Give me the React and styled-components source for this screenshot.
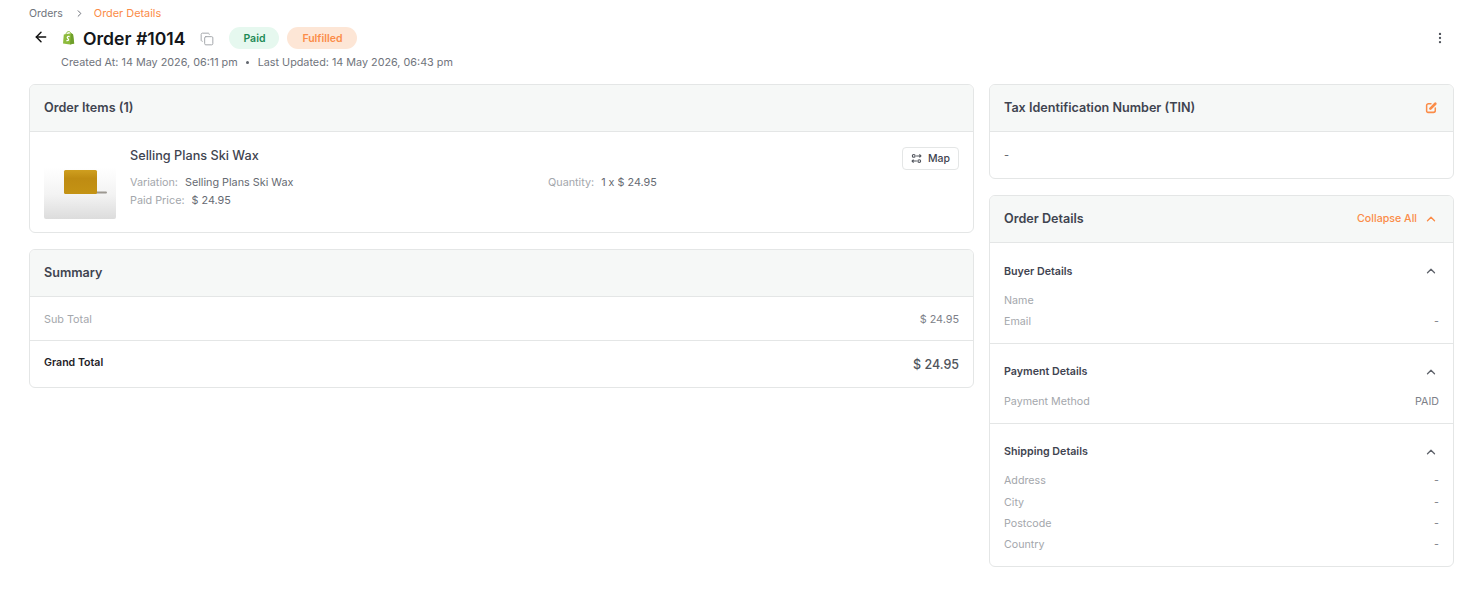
import React from 'react'
import styled, { createGlobalStyle } from 'styled-components'
import { ArrowLeft, ChevronRight, ChevronUp, Copy, EllipsisVertical } from 'lucide-react'

const GlobalStyle = createGlobalStyle`
  html, body { margin: 0; padding: 0; background: #fff; }
  body { font-family: Inter, "Liberation Sans", sans-serif; color: #3f4450; }
`

const orange = '#fb8c48'
const borderColor = '#e4e6e6'

const Page = styled.div`
  width: 1480px;
  height: 608px;
  box-sizing: border-box;
  padding: 7px 26px 0 29px;
  overflow: hidden;
`

const Crumbs = styled.div`
  display: flex;
  align-items: center;
  height: 13px;
  font-size: 10.5px;
  color: #70747c;
`

const CrumbSep = styled(ChevronRight)`
  width: 11px;
  height: 11px;
  margin: 0 9px 0 11px;
  color: #60646c;
`

const CrumbActive = styled.span`
  margin-top: -1px;
  font-size: 10.9px;
  color: ${orange};
`

const TitleRow = styled.div`
  display: flex;
  align-items: center;
  height: 26px;
  margin-top: 5px;
`

const BackIcon = styled(ArrowLeft)`
  width: 16px;
  height: 16px;
  margin: -3px 0 0 4px;
  color: #111;
`

const Bag = styled.svg`
  width: 13px;
  height: 14px;
  margin-left: 13px;
`

const Title = styled.h1`
  margin: 0 0 0 8px;
  font-size: 17.6px;
  font-weight: 600;
  color: #14161a;
`

const CopyIcon = styled(Copy)`
  width: 14px;
  height: 14px;
  margin: 1px 0 0 15px;
  color: #a4a7ab;
`

const Pill = styled.span`
  display: inline-flex;
  align-items: center;
  justify-content: center;
  height: 22px;
  width: ${p => p.$width}px;
  margin-left: ${p => p.$gap}px;
  border-radius: 11px;
  font-size: 10.5px;
  font-weight: 600;
  color: ${p => p.$color};
  background: ${p => p.$bg};
`

const MoreButton = styled(EllipsisVertical)`
  width: 14px;
  height: 14px;
  margin-left: auto;
  margin-right: 7px;
  color: #50545c;
`

const Meta = styled.div`
  display: flex;
  align-items: center;
  height: 13px;
  margin: 5px 0 0 32px;
  font-size: 10.8px;
  color: #70747c;
`

const Dot = styled.span`
  width: 3px;
  height: 3px;
  margin: 0 9px 0 8px;
  border-radius: 50%;
  background: #60646c;
`

const Columns = styled.div`
  display: grid;
  grid-template-columns: 945px 465px;
  gap: 15px;
  margin-top: 15px;
  align-items: start;
`

const Column = styled.div`
  display: flex;
  flex-direction: column;
  gap: 16px;
`

const Card = styled.section`
  box-sizing: border-box;
  border: 1px solid ${borderColor};
  border-radius: 6px;
  overflow: hidden;
  background: #fff;
`

const CardHeader = styled.header`
  display: flex;
  align-items: center;
  justify-content: space-between;
  box-sizing: border-box;
  height: 47px;
  padding: 0 15px 1px 14px;
  background: #f6f8f7;
  border-bottom: 1px solid ${borderColor};
`

const CardTitle = styled.h2`
  margin: 0;
  font-size: 12.6px;
  font-weight: 600;
  color: #3f4450;
`

const ItemBody = styled.div`
  display: flex;
  height: 100px;
  box-sizing: border-box;
  padding: 16px 14px 0;
`

const Thumb = styled.svg`
  width: 72px;
  height: 54px;
  margin-top: 17px;
  flex-shrink: 0;
  border-radius: 2px;
`

const ItemInfo = styled.div`
  flex: 1;
  margin-left: 14px;
`

const ItemName = styled.div`
  height: 17px;
  font-size: 12.7px;
  font-weight: 500;
  color: #3f4450;
`

const ItemGrid = styled.div`
  display: grid;
  grid-template-columns: 418px 1fr;
  margin-top: 11px;
  row-gap: 4px;
`

const Attr = styled.div`
  display: flex;
  gap: 7px;
  height: 14px;
  line-height: 14px;
  font-size: 10.8px;
  color: #666a72;
`

const AttrLabel = styled.span`
  color: #a4a7ac;
`

const MapButton = styled.button`
  display: inline-flex;
  align-items: center;
  align-self: flex-start;
  gap: 6px;
  box-sizing: border-box;
  height: 23px;
  width: 57px;
  margin-top: -1px;
  padding: 0 0 0 8px;
  font: 500 10.5px Inter, sans-serif;
  color: #3f4450;
  background: #fff;
  border: 1px solid ${borderColor};
  border-radius: 4px;
`

const MapGlyph = styled.svg`
  width: 11px;
  height: 11px;
`

const SummaryRow = styled.div`
  display: flex;
  align-items: center;
  justify-content: space-between;
  height: ${p => p.$height}px;
  padding: ${p => (p.$ruled ? 0 : '1px')} 14px 0;
  border-top: ${p => (p.$ruled ? `1px solid ${borderColor}` : 'none')};
  box-sizing: border-box;
  font-size: 10.8px;
  color: #a4a7ac;
`

const SubAmount = styled.span`
  color: #7d8088;
`

const GrandLabel = styled.span`
  margin-top: -4px;
  font-size: 10.6px;
  font-weight: 600;
  color: #1e2126;
`

const GrandAmount = styled.span`
  font-size: 12.5px;
  font-weight: 500;
  color: #50545c;
`

const TinBody = styled.div`
  height: 46px;
  padding: 0 14px;
  line-height: 46px;
  font-size: 11px;
  color: #60646c;
`

const EditGlyph = styled.svg`
  width: 13px;
  height: 13px;
`

const Collapse = styled.div`
  display: flex;
  align-items: center;
  gap: 7px;
  font-size: 10.65px;
  font-weight: 500;
  color: ${orange};
`

const Caret = styled(ChevronUp)`
  width: 14px;
  height: 14px;
  color: ${p => p.$color || '#5e626a'};
`

const Section = styled.div`
  box-sizing: border-box;
  padding: 20px 14px 14px;
  border-top: ${p => (p.$ruled ? `1px solid ${borderColor}` : 'none')};
`

const SectionHead = styled.div`
  display: flex;
  align-items: center;
  justify-content: space-between;
  height: 16px;
  padding-right: 1px;
  font-size: 10.7px;
  font-weight: 600;
  color: #3f4450;
`

const DetailList = styled.div`
  display: flex;
  flex-direction: column;
  gap: 7.4px;
  margin-top: 14.6px;
`

const DetailRow = styled.div`
  display: flex;
  justify-content: space-between;
  height: 14px;
  line-height: 14px;
  font-size: 10.7px;
  color: #a4a7ac;
`

const DetailValue = styled.span`
  color: #7d8088;
`

const sections = [
  { title: 'Buyer Details', rows: [['Name', ''], ['Email', '-']] },
  { title: 'Payment Details', rows: [['Payment Method', 'PAID']] },
  { title: 'Shipping Details', rows: [['Address', '-'], ['City', '-'], ['Postcode', '-'], ['Country', '-']] },
]

export default function App() {
  return (
    <Page>
      <GlobalStyle />
      <Crumbs>
        Orders
        <CrumbSep strokeWidth={2} />
        <CrumbActive>Order Details</CrumbActive>
      </Crumbs>
      <TitleRow>
        <BackIcon strokeWidth={2.2} />
        <Bag viewBox="0 0 13 14">
          <path d="M4 4C4 1.5 5.5.6 6.8.6S9 1.8 9.2 3.6" fill="none" stroke="#8dbb3c" strokeWidth="1" />
          <path d="M1.8 3.6 L9 2.2 L11 3.2 L12.2 12.4 L8 13.6 L1 12.4 Z" fill="#8dbb3c" />
          <path d="M9 2.2 L11 3.2 L12.2 12.4 L8 13.6 Z" fill="#6f9f2c" />
          <path d="M7.6 5.6 C5.6 5 4.6 6.5 5.8 7.5 C7 8.5 7 9.9 4.4 9.6" fill="none" stroke="#fff" strokeWidth="1.3" />
        </Bag>
        <Title>Order #1014</Title>
        <CopyIcon strokeWidth={1.7} />
        <Pill $width={50} $gap={15} $color="#1d8a56" $bg="#e6f8ef">Paid</Pill>
        <Pill $width={70} $gap={8} $color={orange} $bg="#fde6d6">Fulfilled</Pill>
        <MoreButton strokeWidth={2} />
      </TitleRow>
      <Meta>
        Created At: 14 May 2026, 06:11 pm
        <Dot />
        Last Updated: 14 May 2026, 06:43 pm
      </Meta>
      <Columns>
        <Column>
          <Card>
            <CardHeader><CardTitle>Order Items (1)</CardTitle></CardHeader>
            <ItemBody>
              <Thumb viewBox="0 0 72 54">
                <defs>
                  <linearGradient id="thumbBg" x1="0" y1="0" x2="0" y2="1">
                    <stop offset="0.05" stopColor="#ffffff" />
                    <stop offset="0.55" stopColor="#f3f3f3" />
                    <stop offset="1" stopColor="#dcdcdc" />
                  </linearGradient>
                  <linearGradient id="waxFill" x1="0" y1="0" x2="0" y2="1">
                    <stop offset="0" stopColor="#cf9f1f" />
                    <stop offset="0.35" stopColor="#bf8c12" />
                    <stop offset="1" stopColor="#c49314" />
                  </linearGradient>
                </defs>
                <rect width="72" height="54" fill="url(#thumbBg)" />
                <rect x="40" y="26.5" width="23" height="2" rx="1" fill="#7f7a70" opacity="0.75" />
                <rect x="20" y="5" width="33" height="24" rx="1.5" fill="url(#waxFill)" />
              </Thumb>
              <ItemInfo>
                <ItemName>Selling Plans Ski Wax</ItemName>
                <ItemGrid>
                  <Attr><AttrLabel>Variation:</AttrLabel>Selling Plans Ski Wax</Attr>
                  <Attr><AttrLabel>Quantity:</AttrLabel>1 x $ 24.95</Attr>
                  <Attr><AttrLabel>Paid Price:</AttrLabel>$ 24.95</Attr>
                </ItemGrid>
              </ItemInfo>
              <MapButton>
                <MapGlyph viewBox="0 0 12 12" fill="none" stroke="#50545c" strokeWidth="1.2">
                  <circle cx="3" cy="3.2" r="1.5" />
                  <path d="M5.6 3.200H10.800M9.200 1.600 10.800 3.200 9.200 4.800" />
                  <circle cx="9" cy="8.800" r="1.5" />
                  <path d="M6.400 8.800H1.200M2.800 7.200 1.200 8.800 2.800 10.400" />
                </MapGlyph>
                Map
              </MapButton>
            </ItemBody>
          </Card>
          <Card>
            <CardHeader><CardTitle>Summary</CardTitle></CardHeader>
            <SummaryRow $height={43}>Sub Total<SubAmount>$ 24.95</SubAmount></SummaryRow>
            <SummaryRow $ruled $height={47}>
              <GrandLabel>Grand Total</GrandLabel>
              <GrandAmount>$ 24.95</GrandAmount>
            </SummaryRow>
          </Card>
        </Column>
        <Column>
          <Card>
            <CardHeader>
              <CardTitle>Tax Identification Number (TIN)</CardTitle>
              <EditGlyph viewBox="0 0 24 24" fill="none" stroke={orange} strokeLinecap="round" strokeLinejoin="round">
                <path d="M11 5H6.500A3.500 3.500 0 0 0 3 8.500V18.500A2.500 2.500 0 0 0 5.500 21H15.500A3.500 3.500 0 0 0 19 17.500V13" strokeWidth="2.8" />
                <path d="M10 14 19 5" strokeWidth="5" />
              </EditGlyph>
            </CardHeader>
            <TinBody>-</TinBody>
          </Card>
          <Card>
            <CardHeader>
              <CardTitle>Order Details</CardTitle>
              <Collapse>Collapse All<Caret $color={orange} strokeWidth={2.4} /></Collapse>
            </CardHeader>
            {sections.map((section, i) => (
              <Section key={section.title} $ruled={i > 0}>
                <SectionHead>{section.title}<Caret strokeWidth={2.2} /></SectionHead>
                <DetailList>
                  {section.rows.map(([label, value]) => (
                    <DetailRow key={label}>{label}<DetailValue>{value}</DetailValue></DetailRow>
                  ))}
                </DetailList>
              </Section>
            ))}
          </Card>
        </Column>
      </Columns>
    </Page>
  )
}
